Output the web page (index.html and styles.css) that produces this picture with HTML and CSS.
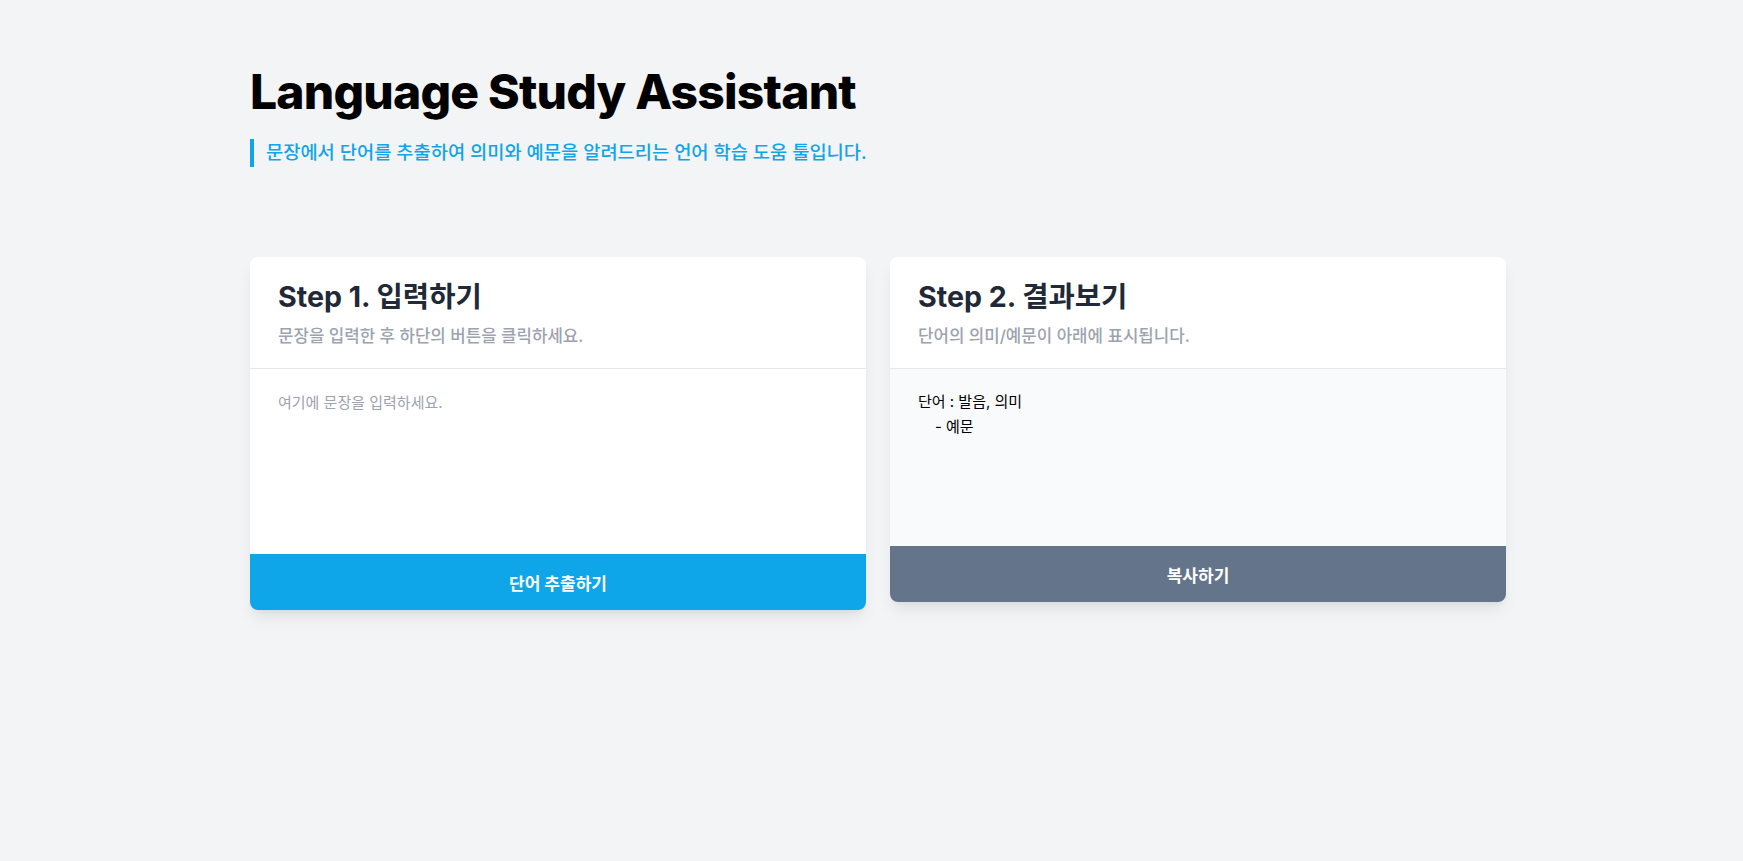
FILE: index.html
```html
<!DOCTYPE html>
<html lang="ko">
<head>
<meta charset="utf-8">
<title>Language Study Assistant</title>
<link rel="stylesheet" href="styles.css">
</head>
<body>
<main class="page">
  <header class="intro">
    <h1 class="intro-title">Language Study Assistant</h1>
    <p class="intro-sub">문장에서 단어를 추출하여 의미와 예문을 알려드리는 언어 학습 도움 툴입니다.</p>
  </header>
  <section class="cards">
    <div class="card">
      <div class="card-head">
        <h2 class="card-title">Step 1. 입력하기</h2>
        <p class="card-desc">문장을 입력한 후 하단의 버튼을 클릭하세요.</p>
      </div>
      <textarea class="card-input" placeholder="여기에 문장을 입력하세요."></textarea>
      <button class="card-btn btn-primary" type="button">단어 추출하기</button>
    </div>
    <div class="card">
      <div class="card-head">
        <h2 class="card-title">Step 2. 결과보기</h2>
        <p class="card-desc">단어의 의미/예문이 아래에 표시됩니다.</p>
      </div>
      <div class="card-output">단어 : 발음, 의미
    - 예문</div>
      <button class="card-btn btn-secondary" type="button">복사하기</button>
    </div>
  </section>
</main>
</body>
</html>
```
FILE: styles.css
```css
* { box-sizing: border-box; }
html, body { margin: 0; padding: 0; }
body {
  background: #f3f4f6;
  font-family: Inter, "Noto Sans CJK KR", sans-serif;
  color: #111827;
  min-height: 100vh;
}
.page {
  width: 1256px;
  margin-left: 250px;
  padding-top: 68px;
}
.intro-title {
  margin: 0;
  font-size: 48px;
  line-height: 48px;
  font-weight: 800;
  letter-spacing: -0.8px;
  color: #000;
}
.intro-sub {
  margin: 23px 0 0;
  border-left: 4px solid #0ea5e9;
  padding-left: 12px;
  font-size: 18.7px;
  line-height: 28px;
  font-weight: 500;
  color: #0ea5e9;
}
.cards {
  margin-top: 90px;
  display: flex;
  gap: 24px;
  align-items: flex-start;
}
.card {
  flex: 1 1 0;
  background: #fff;
  border-radius: 8px;
  overflow: hidden;
  box-shadow: 0 10px 15px -3px rgba(0,0,0,0.08), 0 4px 6px -4px rgba(0,0,0,0.08);
  display: flex;
  flex-direction: column;
}
.card-head {
  padding: 22px 28px 20px;
  border-bottom: 1px solid #e5e7eb;
}
.card-title {
  margin: 0;
  font-size: 28.6px;
  line-height: 36px;
  font-weight: 700;
  color: #1f2937;
}
.card-desc {
  margin: 9px 0 0;
  font-size: 16.8px;
  line-height: 24px;
  font-weight: 500;
  color: #9ca3af;
}
.card-input {
  display: block;
  width: 100%;
  height: 185px;
  padding: 22px 28px;
  border: none;
  outline: none;
  resize: none;
  font-family: Inter, "Noto Sans CJK KR", sans-serif;
  font-size: 15px;
  line-height: 24px;
  color: #111827;
  background: #fff;
}
.card-input::placeholder { color: #9ca3af; }
.card-output {
  height: 177px;
  padding: 20px 28px;
  background: #f9fafb;
  white-space: pre-wrap;
  font-size: 15px;
  line-height: 25px;
  color: #000;
}
.card-btn {
  display: block;
  width: 100%;
  height: 56px;
  border: none;
  font-family: Inter, "Noto Sans CJK KR", sans-serif;
  font-size: 17px;
  font-weight: 700;
  color: #fff;
  cursor: pointer;
}
.btn-primary { background: #0ea5e9; }
.btn-secondary { background: #64748b; }
```
